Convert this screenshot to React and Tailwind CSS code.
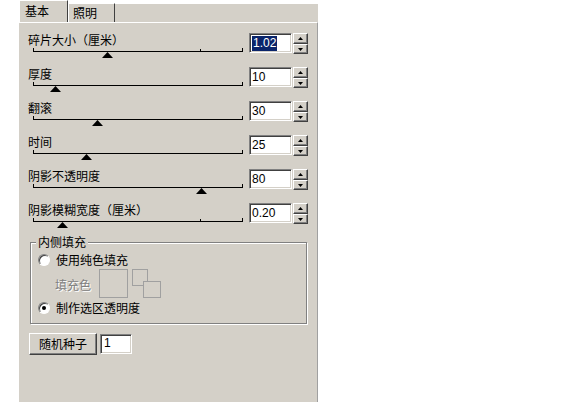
const sliders = [
  { label: '碎片大小（厘米）', value: '1.02', thumb: 74, midTick: true, selected: true },
  { label: '厚度', value: '10', thumb: 22 },
  { label: '翻滚', value: '30', thumb: 64 },
  { label: '时间', value: '25', thumb: 53 },
  { label: '阴影不透明度', value: '80', thumb: 168 },
  { label: '阴影模糊宽度（厘米）', value: '0.20', thumb: 29, midTick: true },
];

const sunken =
  'border border-t-[#808080] border-l-[#808080] border-b-white border-r-white shadow-[inset_1px_1px_0_#404040,inset_-1px_-1px_0_#d4d0c8] bg-white';
const raised =
  'border border-t-white border-l-white border-b-[#404040] border-r-[#404040] shadow-[inset_-1px_-1px_0_#808080] bg-[#d4d0c8]';

const Spinner = () => (
  <div className="flex flex-col w-[15px] h-[21px]">
    <div className={`${raised} h-[11px] flex items-center justify-center`}>
      <svg width="5" height="3" viewBox="0 0 5 3"><polygon points="2.5,0 5,3 0,3" fill="#000" /></svg>
    </div>
    <div className={`${raised} h-[10px] flex items-center justify-center`}>
      <svg width="5" height="3" viewBox="0 0 5 3"><polygon points="0,0 5,0 2.5,3" fill="#000" /></svg>
    </div>
  </div>
);

const SliderRow = ({ label, value, thumb, midTick, selected }) => (
  <div className="flex h-[34px]">
    <div className="w-[230px] pl-[9px]">
      <div className="h-[14px] leading-[14px]">{label}</div>
      <div className="relative ml-[5px] w-[210px] h-[14px]">
        <div className="absolute left-0 top-[4px] w-full h-px bg-black" />
        <div className="absolute left-0 top-px w-px h-[4px] bg-black" />
        <div className="absolute right-0 top-px w-px h-[4px] bg-black" />
        {midTick && <div className="absolute left-[167px] top-[2px] w-px h-[3px] bg-black" />}
        <svg className="absolute top-[5px]" style={{ left: thumb - 5 }} width="11" height="6" viewBox="0 0 11 6">
          <polygon points="5.5,0 11,6 0,6" fill="#000" />
        </svg>
      </div>
    </div>
    <div className={`${sunken} w-[43px] h-[20px] px-[2px] flex items-center font-['Liberation_Sans',sans-serif]`}>
      {selected ? (
        <span className="bg-[#0a246a] text-white leading-[15px] px-px">{value}</span>
      ) : (
        <span className="leading-[15px]">{value}</span>
      )}
    </div>
    <div className="ml-px">
      <Spinner />
    </div>
  </div>
);

const Radio = ({ checked }) => (
  <div className="w-[12px] h-[12px] rounded-full bg-white border border-t-[#808080] border-l-[#808080] border-b-white border-r-white shadow-[inset_1px_1px_0_#404040] flex items-center justify-center">
    {checked && <div className="w-[4px] h-[4px] rounded-full bg-black" />}
  </div>
);

export default function App() {
  return (
    <div className="w-[563px] h-[402px] bg-white text-[12px] text-black font-['Noto_Sans_CJK_SC',sans-serif]">
      <div className="ml-[19px] w-[299px] h-[402px] flex flex-col">
        <div className="h-[22px] flex items-end bg-white">
          <div className="w-[49px] h-[22px] bg-[#d4d0c8] border-t border-l border-white border-r border-r-[#404040] pl-[5px] pt-[3px] leading-[14px]">
            基本
          </div>
          <div className="w-[47px] h-[19px] bg-[#d4d0c8] border-t border-l border-white border-r border-r-[#404040] pl-[4px] pt-[2px] leading-[14px]">
            照明
          </div>
          <div className="flex-1 h-[18px] bg-[#d4d0c8]" />
        </div>
        <div className="flex-1 bg-[#d4d0c8] border-t border-white border-r border-r-[#a0a0a0] pt-[10px]">
          {sliders.map((s) => (
            <SliderRow key={s.label} {...s} />
          ))}
          <div className="relative ml-[11px] mt-[5px] w-[277px] h-[82px] border border-[#808080] shadow-[inset_1px_1px_0_white,1px_1px_0_white]">
            <div className="absolute left-[5px] -top-[8px] px-[2px] bg-[#d4d0c8] leading-[14px]">内侧填充</div>
            <div className="flex items-center h-[14px] mt-[10px] ml-[7px] gap-[6px]">
              <Radio />
              <span>使用纯色填充</span>
            </div>
            <div className="flex mt-[2px] ml-[24px]">
              <div className="w-[44px] pt-[9px] text-[#808080] [text-shadow:1px_1px_0_white] leading-[14px]">填充色</div>
              <div className="w-[29px] h-[29px] border border-[#a0a0a0]" />
              <div className="relative w-[30px] h-[29px] ml-[4px]">
                <div className="absolute left-0 top-0 w-[16px] h-[17px] border border-[#a0a0a0]" />
                <div className="absolute left-[11px] top-[12px] w-[18px] h-[17px] border border-[#a0a0a0] bg-[#d4d0c8]" />
              </div>
            </div>
            <div className="flex items-center h-[14px] mt-[3px] ml-[7px] gap-[6px]">
              <Radio checked />
              <span>制作选区透明度</span>
            </div>
          </div>
          <div className="flex items-start ml-[10px] mt-[9px] gap-[3px]">
            <div className="w-[68px] h-[22px] border border-t-white border-l-white border-b-[#404040] border-r-[#404040] shadow-[inset_-1px_-1px_0_#808080] flex items-center justify-center">
              随机种子
            </div>
            <div className={`${sunken} w-[32px] h-[20px] mt-px px-[3px] leading-[16px] font-['Liberation_Sans',sans-serif]`}>1</div>
          </div>
        </div>
      </div>
    </div>
  );
}
